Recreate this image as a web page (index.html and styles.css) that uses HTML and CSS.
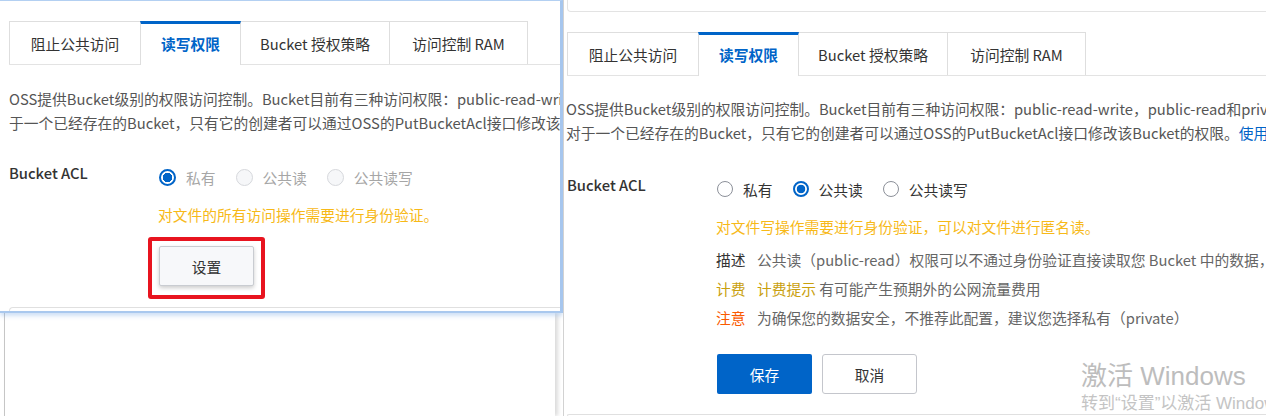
FILE: index.html
```html
<!DOCTYPE html>
<html lang="zh-CN">
<head>
<meta charset="utf-8">
<title>读写权限</title>
<link rel="stylesheet" href="styles.css">
</head>
<body>
<div class="stage">
  <section class="shot shot-left">
    <div class="win">
      <div class="tabs">
        <div class="tab t1">阻止公共访问</div>
        <div class="tab t2 active">读写权限</div>
        <div class="tab t3">Bucket 授权策略</div>
        <div class="tab t4">访问控制 RAM</div>
      </div>
      <div class="intro">
        <p>OSS提供Bucket级别的权限访问控制。Bucket目前有三种访问权限：public-read-write，public-read和private。对</p>
        <p>于一个已经存在的Bucket，只有它的创建者可以通过OSS的PutBucketAcl接口修改该Bucket的权限。使用说明</p>
      </div>
      <div class="form">
        <div class="label">Bucket ACL</div>
        <div class="field">
          <div class="radios disabled">
            <span class="radio checked"><span class="dot"></span>私有</span>
            <span class="radio"><span class="dot"></span>公共读</span>
            <span class="radio"><span class="dot"></span>公共读写</span>
          </div>
          <div class="hint">对文件的所有访问操作需要进行身份验证。</div>
          <div class="mark"><button class="btn btn-set">设置</button></div>
        </div>
      </div>
      <div class="next-card"></div>
    </div>
    <div class="behind"></div>
  </section>

  <section class="shot shot-right">
    <div class="prev-card"></div>
    <div class="tabs">
      <div class="tab t1">阻止公共访问</div>
      <div class="tab t2 active">读写权限</div>
      <div class="tab t3">Bucket 授权策略</div>
      <div class="tab t4">访问控制 RAM</div>
    </div>
    <div class="intro">
      <p>OSS提供Bucket级别的权限访问控制。Bucket目前有三种访问权限：public-read-write，public-read和private。</p>
      <p>对于一个已经存在的Bucket，只有它的创建者可以通过OSS的PutBucketAcl接口修改该Bucket的权限。<a class="link">使用说明</a></p>
    </div>
    <div class="form">
      <div class="label">Bucket ACL</div>
      <div class="field">
        <div class="radios">
          <span class="radio"><span class="dot"></span>私有</span>
          <span class="radio checked"><span class="dot"></span>公共读</span>
          <span class="radio"><span class="dot"></span>公共读写</span>
        </div>
        <div class="hint">对文件写操作需要进行身份验证，可以对文件进行匿名读。</div>
        <div class="notes">
          <div class="note"><span class="note-k">描述</span><span class="note-v">公共读（public-read）权限可以不通过身份验证直接读取您 Bucket 中的数据，安全风险高。</span></div>
          <div class="note"><span class="note-k gold">计费</span><span class="note-v"><span class="gold">计费提示</span> 有可能产生预期外的公网流量费用</span></div>
          <div class="note"><span class="note-k warn">注意</span><span class="note-v">为确保您的数据安全，不推荐此配置，建议您选择私有（private）</span></div>
        </div>
        <div class="actions">
          <button class="btn btn-primary">保存</button>
          <button class="btn btn-default">取消</button>
        </div>
      </div>
    </div>
    <div class="next-card"></div>
  </section>

  <div class="watermark">
    <div class="wm-title">激活 Windows</div>
    <div class="wm-sub">转到“设置”以激活 Windows。</div>
  </div>
</div>
</body>
</html>
```

FILE: styles.css
```css
html, body {
  margin: 0;
  padding: 0;
  overflow: hidden;
  background: #fff;
}

body {
  font-family: "Noto Sans CJK SC", "Microsoft YaHei", sans-serif;
  font-size: 14.75px;
  color: #333;
}

.stage {
  position: relative;
  display: flex;
  width: 1266px;
  height: 416px;
  overflow: hidden;
}

.shot {
  display: flex;
  flex-direction: column;
  height: 416px;
  overflow: hidden;
  box-sizing: border-box;
}

/* ---------- left screenshot ---------- */
.shot-left {
  width: 563px;
  flex: none;
}

.win {
  height: 313px;
  box-sizing: border-box;
  display: flex;
  flex-direction: column;
  border-top: 1px solid #b3d0f2;
  border-right: 3px solid #a6c6ee;
  border-bottom: 2px solid #a9c8ee;
  box-shadow: 0 3px 4px rgba(120, 170, 230, 0.35);
  padding: 20px 0 0 9px;
  overflow: hidden;
  background: #fff;
  position: relative;
  z-index: 1;
}

.behind {
  flex: 1;
  margin-left: 4px;
  margin-right: 8px;
  border-left: 1px solid #c6c6c6;
  box-shadow: 3px 0 4px rgba(0, 0, 0, 0.14);
  background: #fff;
}

/* ---------- right screenshot ---------- */
.shot-right {
  flex: 1;
  border-left: 1px solid #d2d2d2;
  padding-left: 3px;
}

.prev-card {
  height: 12px;
  box-sizing: border-box;
  flex: none;
  border-left: 1px solid #e3e3e3;
  border-bottom: 1px solid #e3e3e3;
  border-bottom-left-radius: 4px;
}

.shot-right .tabs {
  margin-top: 20px;
}

/* ---------- tabs ---------- */
.tabs {
  display: flex;
  align-items: flex-start;
  border-bottom: 1px solid #e3e3e3;
  flex: none;
  height: 43px;
}

.tab {
  height: 43px;
  box-sizing: border-box;
  display: flex;
  align-items: center;
  justify-content: center;
  border: 1px solid #dedede;
  border-bottom: none;
  margin-left: -1px;
  background: #fff;
  color: #333;
  white-space: nowrap;
}

.tab.t1 { width: 132px; margin-left: 0; }
.tab.t2 { width: 101px; }
.tab.t3 { width: 150px; }
.tab.t4 { width: 139px; }

.tab.active {
  height: 44px;
  border-top: 3px solid #0064c8;
  padding-bottom: 3px;
  color: #0064c8;
  font-weight: 700;
  position: relative;
  z-index: 1;
}

/* ---------- intro text ---------- */
.intro {
  margin-top: 22px;
  color: #555;
  line-height: 24px;
  flex: none;
}

.shot-right .intro {
  margin-top: 21px;
  margin-left: -1px;
}

.intro p {
  margin: 0;
  white-space: nowrap;
}

.link {
  color: #0064c8;
}

/* ---------- form ---------- */
.form {
  display: flex;
  margin-top: 28px;
  flex: none;
}

.shot-right .form {
  margin-top: 30px;
}

.label {
  width: 150px;
  flex: none;
  line-height: 20px;
  font-weight: 500;
  color: #333;
}

.field {
  flex: 1;
  min-width: 0;
}

.radios {
  display: flex;
  align-items: center;
  height: 28px;
  white-space: nowrap;
}

.radio {
  display: inline-flex;
  align-items: center;
  gap: 10px;
  margin-right: 20px;
  color: #333;
}

.dot {
  width: 16px;
  height: 16px;
  box-sizing: border-box;
  border-radius: 50%;
  border: 1px solid #8c9099;
  background: #fff;
  flex: none;
}

.radio.checked .dot {
  border: 2px solid #0064c8;
  background: radial-gradient(circle, #0064c8 0 4px, #fff 4.6px);
}

.radios.disabled .radio {
  color: #a6a6a6;
}

.radios.disabled .dot {
  width: 17px;
  height: 17px;
  border-color: #d6d8dc;
  background: #f6f7f9;
}

.radios.disabled .radio.checked .dot {
  border: 2px solid #0064c8;
  background: radial-gradient(circle, #0064c8 0 4.5px, #fff 5px);
}

.hint {
  margin-top: 14px;
  margin-left: -1px;
  line-height: 20px;
  color: #f7b918;
  white-space: nowrap;
}

/* red annotation box around the button */
.mark {
  display: inline-block;
  margin-top: 12px;
  margin-left: -11px;
  border: 4px solid #e8141f;
  border-radius: 3px;
  padding: 5px 7px 9px 7px;
}

.btn {
  font-family: inherit;
  font-size: 14.75px;
  width: 95px;
  height: 40px;
  box-sizing: border-box;
  padding: 0;
  cursor: pointer;
}

.btn-set {
  background: #f7f8fa;
  border: 1px solid #c9ccd1;
  border-radius: 2px;
  box-shadow: 0 2px 4px rgba(0, 0, 0, 0.2);
  color: #333;
}

.next-card {
  flex: 1;
  margin-top: 8px;
  border-top: 1px solid #e0e0e0;
  border-left: 1px solid #e0e0e0;
  border-top-left-radius: 5px;
}

.shot-right .next-card {
  margin-top: 20px;
}

/* ---------- notes ---------- */
.notes {
  margin-top: 13px;
  display: flex;
  flex-direction: column;
  gap: 9px;
  margin-left: -1px;
}

.note {
  display: flex;
  line-height: 20px;
  white-space: nowrap;
}

.note-k {
  width: 30px;
  margin-right: 11px;
  flex: none;
  color: #333;
}

.note-v {
  color: #666;
}

.gold {
  color: #c9a00e;
}

.note-k.warn {
  color: #fa5a00;
}

/* ---------- actions ---------- */
.actions {
  margin-top: 26px;
  display: flex;
  gap: 10px;
}

.btn-primary {
  background: #0064c8;
  border: none;
  border-radius: 2px;
  color: #fff;
}

.btn-default {
  background: #fff;
  border: 1px solid #c4c6cc;
  border-radius: 3px;
  color: #333;
}

/* ---------- windows watermark ---------- */
.watermark {
  position: absolute;
  left: 1081px;
  top: 360px;
  white-space: nowrap;
  color: #c4c4c4;
  pointer-events: none;
  z-index: 5;
  font-family: "Liberation Sans", "Noto Sans CJK SC", sans-serif;
}

.wm-title {
  font-size: 26px;
  line-height: 32px;
  color: #bdbdbd;
}

.wm-sub {
  font-size: 17px;
  line-height: 22px;
  margin-top: 1px;
}
```
